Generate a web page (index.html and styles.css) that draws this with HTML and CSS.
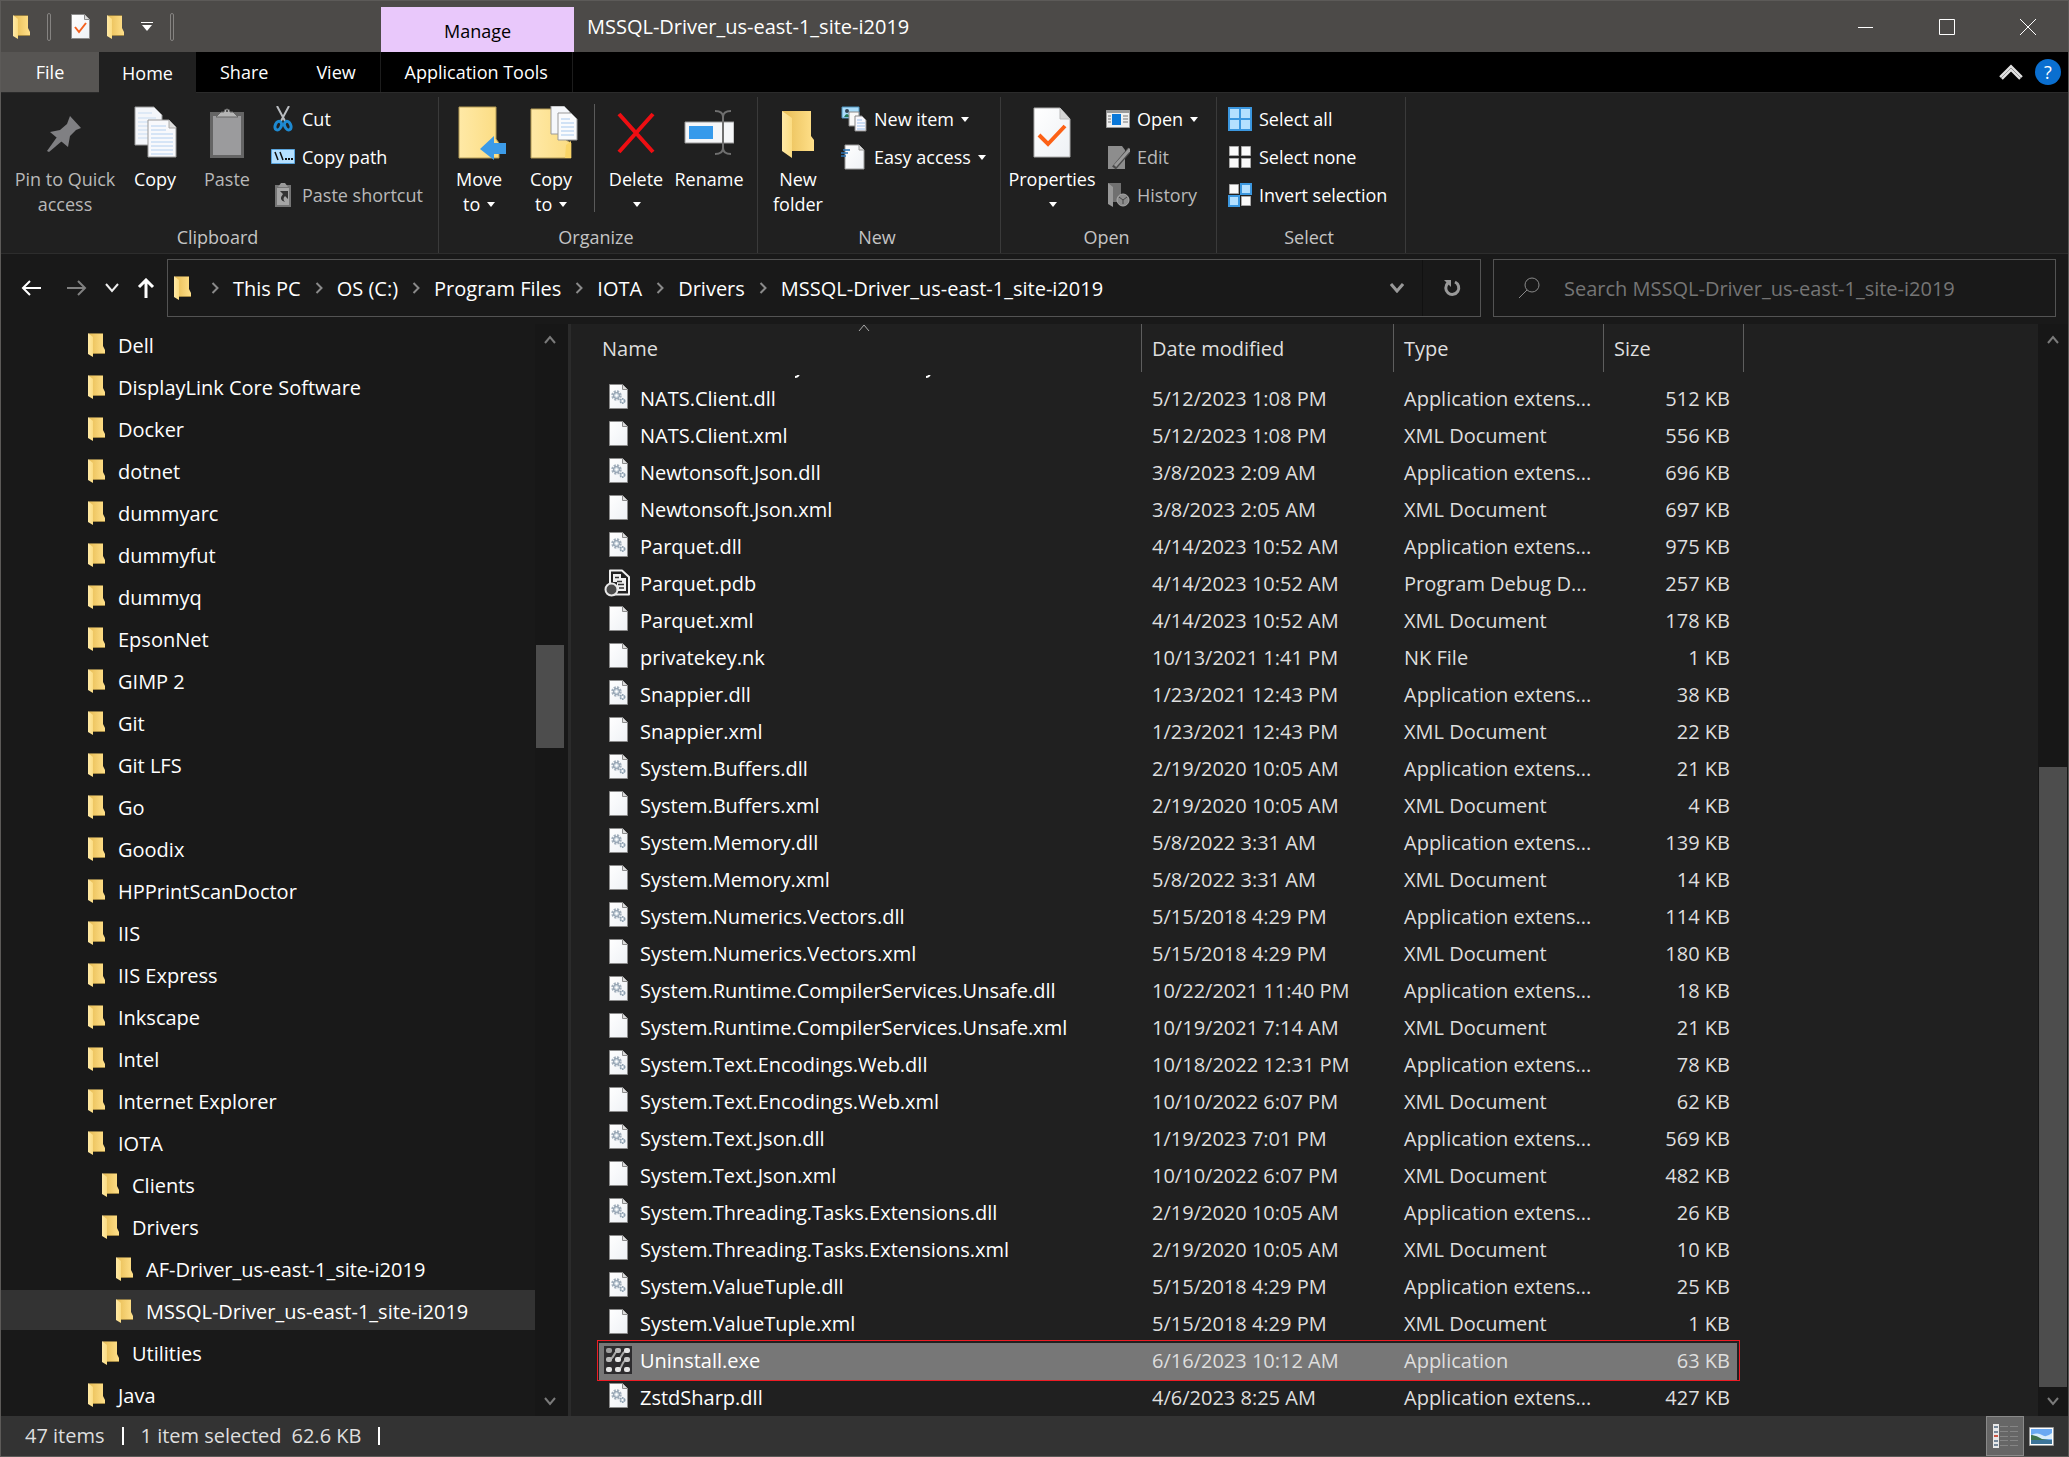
FILE: index.html
```html
<!DOCTYPE html>
<html lang="en">
<head>
    <meta charset="utf-8">
    <title>MSSQL-Driver_us-east-1_site-i2019</title>
    <link rel="stylesheet" href="styles.css">
</head>
<body>
    <!-- shared icons -->
    <svg class="sprite" aria-hidden="true">
        <defs>
            <linearGradient id="gold" x1="0" x2="1"><stop offset="0" stop-color="#e8bd55"/><stop offset="1" stop-color="#ffe08a"/></linearGradient>
            <linearGradient id="flap" x1="0" x2="1"><stop offset="0" stop-color="#ffe9a6"/><stop offset="1" stop-color="#fbdc82"/></linearGradient>
            <linearGradient id="paper" x1="0" x2="1" y2="1"><stop offset="0" stop-color="#ffffff"/><stop offset="1" stop-color="#eef1f5"/></linearGradient>
        </defs>
        <symbol id="folder" viewBox="0 0 17 24">
            <path d="M1 0H15V13L17 17V21H4Z" fill="url(#gold)"/>
            <path d="M1 0H15V1H1Z" fill="#8f7a45"/>
            <path d="M4 20H17V21H4Z" fill="#a58a45"/>
            <path d="M0 0L5 4V24L0 21Z" fill="url(#flap)"/>
        </symbol>
        <symbol id="page" viewBox="0 0 19 25">
            <path d="M.5 .5H13.500L18.500 5.500V24.500H.5Z" fill="url(#paper)" stroke="#8b8b8b"/>
            <path d="M13.500 .5V5.500H18.500" fill="#dcdcdc" stroke="#8b8b8b"/>
        </symbol>
        <symbol id="dll" viewBox="0 0 19 25">
            <use href="#page"/>
            <circle cx="7.500" cy="11.500" r="4" fill="none" stroke="#a3b0bd" stroke-width="2.500" stroke-dasharray="2 1.140"/>
            <circle cx="7.500" cy="11.500" r="3" fill="#c5d0da" stroke="#8b9aaa"/>
            <circle cx="7.500" cy="11.500" r="1.200" fill="#fff"/>
            <circle cx="13.500" cy="17" r="2.300" fill="#b8c6d2" stroke="#8fa0b0" stroke-width="1.500" stroke-dasharray="1.500 .8"/>
            <circle cx="13.500" cy="17" r="1" fill="#fff"/>
        </symbol>
        <symbol id="pdb" viewBox="0 0 28 28">
            <path d="M6 1.500H18L25 8V25.500H6Z" fill="#202020" stroke="#f0f0f0" stroke-width="2" stroke-linejoin="round"/>
            <path d="M9 5H17V9H22V22H13V13H9Z" fill="#efefef"/>
            <path d="M11 8.500H15M13 12.500H18M14 15.500H20M15 19H20" stroke="#333" stroke-width="1.500"/>
            <circle cx="7.500" cy="20.500" r="6" fill="#4a4a4a" stroke="#e8e8e8" stroke-width="2"/>
        </symbol>
        <symbol id="exe" viewBox="0 0 28 28">
            <path d="M0 0H28V28H0Z" fill="#2d2c2e"/>
            <g fill="none" stroke="#a9a9a9" stroke-width="2">
                <path d="M14 5Q12 5 10 9T5 14M23 5Q20 5 18 9T14 14M23 14Q20 14 18 19T14 23"/>
            </g>
            <g fill="#e6e6e6">
                <rect x="2" y="2" width="6" height="5" rx="2" fill="#9d9d9d"/><rect x="11" y="2" width="6" height="5" rx="2" fill="#bbb"/><rect x="20" y="2" width="6" height="5" rx="2"/>
                <rect x="2" y="11" width="6" height="5" rx="2" fill="#bbb"/><rect x="11" y="11" width="6" height="5" rx="2"/><rect x="20" y="11" width="6" height="5" rx="2" fill="#c8c8c8"/>
                <rect x="2" y="21" width="6" height="5" rx="2"/><rect x="11" y="21" width="6" height="5" rx="2"/><rect x="20" y="21" width="6" height="5" rx="2"/>
            </g>
        </symbol>
        <symbol id="crumb" viewBox="0 0 8 12"><path d="M1.500 1L6.500 6L1.500 11" fill="none" stroke="#8a8a8a" stroke-width="2"/></symbol>
        <symbol id="up" viewBox="0 0 12 10"><path d="M1 8L6 2L11 8" fill="none" stroke="#7a7a7a" stroke-width="2"/></symbol>
        <symbol id="down" viewBox="0 0 12 10"><path d="M1 2L6 8L11 2" fill="none" stroke="#7a7a7a" stroke-width="2"/></symbol>
        <symbol id="caret" viewBox="0 0 8 5"><path d="M0 0H8L4 5Z" fill="#fff"/></symbol>
    </svg>

    <div class="window">
        <header class="titlebar">
            <div class="quick">
                <svg class="folder"><use href="#folder"/></svg>
                <span class="grip"></span>
                <button class="plain" aria-label="Properties"><svg width="19" height="25" viewBox="0 0 19 25"><use href="#page"/><path d="M4 13L8 18L15 9" fill="none" stroke="#f4611f" stroke-width="2"/></svg></button>
                <button class="plain" aria-label="New folder"><svg class="folder"><use href="#folder"/></svg></button>
                <button class="plain" aria-label="Customize"><svg width="12" height="9" viewBox="0 0 12 9"><path d="M0 .5H12" stroke="#fff"/><path d="M1 3H11L6 9Z" fill="#fff"/></svg></button>
                <span class="grip"></span>
            </div>
            <div class="manage">Manage</div>
            <h1>MSSQL-Driver_us-east-1_site-i2019</h1>
            <div class="controls">
                <button aria-label="Minimize"><svg width="16" height="16"><path d="M0 8.500H15" stroke="#fff"/></svg></button>
                <button aria-label="Maximize"><svg width="16" height="16"><path d="M.5 .5H15.500V15.500H.5Z" fill="none" stroke="#fff"/></svg></button>
                <button aria-label="Close"><svg width="16" height="16"><path d="M0 0L16 16M16 0L0 16" stroke="#fff"/></svg></button>
            </div>
        </header>

        <nav class="tabs">
            <button class="file">File</button>
            <button class="home">Home</button>
            <button>Share</button>
            <button>View</button>
            <button class="tools">Application Tools</button>
            <span class="fill"></span>
            <button class="plain" aria-label="Collapse ribbon"><svg width="24" height="16" viewBox="0 0 24 16"><path d="M2 14L12 4L22 14" fill="none" stroke="#e0e0e0" stroke-width="5"/><path d="M2 14L12 4L22 14" fill="none" stroke="#999" stroke-width="1"/></svg></button>
            <button class="help" aria-label="Help">?</button>
        </nav>

        <section class="ribbon">
            <div class="group clipboard">
                <div class="tools-row">
                    <button class="big pin off"><svg width="54" height="54" viewBox="0 0 54 54"><g fill="#808083"><path d="M32 10L43 22L38 24L32 30L30 41L12 26L22 24L29 18Z"/><path d="M19 31L9 45L11 46L24 35Z"/></g></svg>Pin to Quick<br>access</button>
                    <button class="big narrow"><svg width="46" height="54" viewBox="0 0 46 54"><path d="M3 1H22L30 9V39H3Z" fill="#f4f6fa" stroke="#999"/><path d="M6 7H20M6 12H24M6 16H24M6 20H24M6 24H24M6 28H24M6 32H24" stroke="#c8dcf2"/><path d="M16 14H37L44 21V51H16Z" fill="#f8f9fc" stroke="#999"/><path d="M37 14V22H44" fill="#ddd" stroke="#aaa"/><path d="M19 20H34M19 24H34M19 28H41M19 32H41M19 36H41M19 40H41M19 44H41M19 48H41" stroke="#b4d0f0"/></svg>Copy</button>
                    <button class="big paste off"><svg width="36" height="54" viewBox="0 0 36 54"><path d="M1 6H35V52H1Z" fill="#656565"/><path d="M4 10H32V49H4Z" fill="#9b9b9d"/><path d="M7 11L12 6H15A3 3 0 0 1 21 6H24L29 11Z" fill="#b5b5b5" stroke="#666"/><circle cx="18" cy="5" r="1" fill="#333"/></svg>Paste</button>
                    <div class="list">
                        <button><svg width="24" height="26" viewBox="0 0 24 26"><path d="M6 0L14 15M18 0L10 15" stroke="#b9bcc0" stroke-width="2"/><g fill="none" stroke="#1e8ad2" stroke-width="3"><ellipse cx="7.500" cy="19.500" rx="3" ry="4.500" transform="rotate(25 7 19)"/><ellipse cx="16.500" cy="19.500" rx="3" ry="4.500" transform="rotate(-25 17 19)"/></g></svg>Cut</button>
                        <button><svg width="24" height="26" viewBox="0 0 24 26"><path d="M.5 5.500H23.500V19.500H.5Z" fill="#b5e0ff" stroke="#5aa5dd"/><path d="M4 8L7 16M9 8L12 16" stroke="#111" stroke-width="1.500"/><path d="M14 15H22" stroke="#111" stroke-width="2" stroke-dasharray="2 1"/></svg>Copy path</button>
                        <button class="off"><svg width="24" height="26" viewBox="0 0 24 26"><path d="M4 3H20V25H4Z" fill="#757575"/><path d="M6 6H18V23H6Z" fill="#a5a5a5"/><path d="M7 5L10 1H14L17 5Z" fill="#999"/><path d="M9 9H17V17L14 14Q11 17 14 20Q7 18 12 12Z" fill="#333"/></svg>Paste shortcut</button>
                    </div>
                </div>
                <h2>Clipboard</h2>
            </div>

            <div class="group organize">
                <div class="tools-row">
                    <button class="big"><svg width="54" height="54" viewBox="-6 0 54 54"><path d="M1 1H38V33L41 37V52H1Z" fill="url(#flap)" stroke="#b39a55"/><path d="M48 37H36V30L22 43L36 54V48H48Z" fill="#3c9be8"/></svg>Move<br>to <svg class="caret"><use href="#caret"/></svg></button>
                    <button class="big"><svg width="54" height="54" viewBox="-6 0 54 54"><path d="M1 3H36V34L41 37V52H1Z" fill="url(#flap)" stroke="#b39a55"/><path d="M36 39L41 35V52H35Z" fill="#fad567"/><path d="M21 0H34L40 6V28H21Z" fill="#f5f7fb" stroke="#999"/><path d="M28 7H41L47 13V34H28Z" fill="#fafbfd" stroke="#999"/><path d="M31 13H40M31 17H44M31 21H44M31 25H44M31 29H44" stroke="#a8c9ee"/></svg>Copy<br>to <svg class="caret"><use href="#caret"/></svg></button>
                    <span class="rule"></span>
                    <button class="big"><svg width="44" height="54" viewBox="0 0 44 54"><path d="M5 8L39 46M39 8L5 46" stroke="#ee0e12" stroke-width="4"/></svg>Delete<br><svg class="caret"><use href="#caret"/></svg></button>
                    <button class="big wide"><svg width="50" height="54" viewBox="0 0 50 54"><path d="M1 16H50V37H1Z" fill="#f5f6f8" stroke="#999"/><path d="M5 20H29V33H5Z" fill="#369aeb"/><path d="M31 5Q39 5 39 11V42Q39 48 31 48M47 5Q39 5 39 11V42Q39 48 47 48" fill="none" stroke="#6f6f6f" stroke-width="2"/></svg>Rename</button>
                </div>
                <h2>Organize</h2>
            </div>

            <div class="group new">
                <div class="tools-row">
                    <button class="big"><svg width="36" height="54" viewBox="0 0 36 54"><path d="M2 5H31V30L34 34V45H10Z" fill="url(#gold)"/><path d="M2 5L12 12V52L2 45Z" fill="url(#flap)"/></svg>New<br>folder</button>
                    <div class="list">
                        <button><svg width="26" height="26" viewBox="0 0 26 26"><path d="M1 1H18V12H1Z" fill="#a9dcfa" stroke="#4e93bd"/><circle cx="6" cy="5" r="2" fill="#345"/><path d="M3 11Q6 5 9 11Z" fill="#275"/><path d="M8 6H18V20H8Z" fill="#f8f8f8" stroke="#888"/><path d="M14 10H21L25 14V25H14Z" fill="#f8f8ff" stroke="#888"/><path d="M16 14H21M16 17H24M16 20H24M16 23H24" stroke="#9cc0ea"/></svg>New item <svg class="caret"><use href="#caret"/></svg></button>
                        <button><svg width="26" height="26" viewBox="0 0 26 26"><path d="M4 1H18L23 6V25H4Z" fill="url(#paper)" stroke="#999"/><path d="M18 1V6H23" fill="#ddd" stroke="#999"/><path d="M2 6H9M0 9H7M0 12H5" stroke="#2d74b5" stroke-width="1.500"/></svg>Easy access <svg class="caret"><use href="#caret"/></svg></button>
                    </div>
                </div>
                <h2>New</h2>
            </div>

            <div class="group open">
                <div class="tools-row">
                    <button class="big props"><svg width="38" height="54" viewBox="0 0 38 54"><path d="M1 2H27L37 13V51H1Z" fill="url(#paper)" stroke="#aaa"/><path d="M27 2V13H37" fill="#d5d5d5" stroke="#bbb"/><path d="M6 29L15 38L32 20" fill="none" stroke="#fc6116" stroke-width="4"/></svg>Properties<br><svg class="caret"><use href="#caret"/></svg></button>
                    <div class="list">
                        <button><svg width="24" height="26" viewBox="0 0 24 26"><path d="M.5 4.500H23.500V21.500H.5Z" fill="#f0f0f0" stroke="#999"/><path d="M.5 4H23.500V7H.5Z" fill="#999"/><path d="M6 8H15V19H6Z" fill="#0b78d8"/><path d="M2 10H5M2 13H5M2 16H5M17 10H22M17 13H22M17 16H22" stroke="#777"/></svg>Open <svg class="caret"><use href="#caret"/></svg></button>
                        <button class="off"><svg width="24" height="26" viewBox="0 0 24 26"><path d="M2 2H16L19 6V25H2Z" fill="#8d8d8d"/><path d="M24 5L8 24" stroke="#4a4a4a" stroke-width="5"/><path d="M24 5L9 22" stroke="#999" stroke-width="3"/></svg>Edit</button>
                        <button class="off"><svg width="24" height="26" viewBox="0 0 24 26"><path d="M2 1H15V20H6Z" fill="#707070"/><path d="M2 1L7 5V25L2 22Z" fill="#989898"/><circle cx="17" cy="18" r="6" fill="#8c8c8c" stroke="#aaa"/><path d="M13 15L17 18L21 15M17 18V22" stroke="#444" fill="none"/></svg>History</button>
                    </div>
                </div>
                <h2>Open</h2>
            </div>

            <div class="group select">
                <div class="tools-row">
                    <div class="list">
                        <button><svg width="24" height="26" viewBox="0 0 24 26"><path d="M0 1H24V25H0Z" fill="#3b97df"/><path d="M2 3H11V12H2ZM13 3H22V12H13ZM2 14H11V23H2ZM13 14H22V23H13Z" fill="#b4e0ff"/></svg>Select all</button>
                        <button><svg width="24" height="26" viewBox="0 0 24 26"><path d="M1.500 2.500H10.500V11.500H1.500ZM13.500 2.500H22.500V11.500H13.500ZM1.500 14.500H10.500V23.500H1.500ZM13.500 14.500H22.500V23.500H13.500Z" fill="#fafafa" stroke="#a8a8a8"/></svg>Select none</button>
                        <button><svg width="24" height="26" viewBox="0 0 24 26"><path d="M1.500 2.500H10.500V11.500H1.500ZM13.500 14.500H22.500V23.500H13.500Z" fill="#fafafa" stroke="#a8a8a8"/><path d="M13 2H23V12H13ZM1 14H11V24H1Z" fill="#b4e0ff" stroke="#3b97df" stroke-width="2"/></svg>Invert selection</button>
                    </div>
                </div>
                <h2>Select</h2>
            </div>
        </section>

        <div class="location">
            <div class="history">
                <button class="plain" aria-label="Back"><svg width="20" height="16" viewBox="0 0 20 16"><path d="M20 8H2M9 1L2 8L9 15" fill="none" stroke="#fff" stroke-width="2"/></svg></button>
                <button class="plain" aria-label="Forward"><svg width="20" height="16" viewBox="0 0 20 16"><path d="M0 8H18M11 1L18 8L11 15" fill="none" stroke="#808080" stroke-width="2"/></svg></button>
                <button class="plain" aria-label="Recent locations"><svg width="14" height="10" viewBox="0 0 14 10"><path d="M1 1L7 8L13 1" fill="none" stroke="#eee" stroke-width="2"/></svg></button>
                <button class="plain" aria-label="Up"><svg width="18" height="20" viewBox="0 0 18 20"><path d="M9 20V3M2 9L9 2L16 9" fill="none" stroke="#fff" stroke-width="3"/></svg></button>
            </div>
            <div class="address">
                <svg class="folder"><use href="#folder"/></svg>
                <svg class="crumb"><use href="#crumb"/></svg>
                <a href="#">This PC</a>
                <svg class="crumb"><use href="#crumb"/></svg>
                <a href="#">OS (C:)</a>
                <svg class="crumb"><use href="#crumb"/></svg>
                <a href="#">Program Files</a>
                <svg class="crumb"><use href="#crumb"/></svg>
                <a href="#">IOTA</a>
                <svg class="crumb"><use href="#crumb"/></svg>
                <a href="#">Drivers</a>
                <svg class="crumb"><use href="#crumb"/></svg>
                <a href="#">MSSQL-Driver_us-east-1_site-i2019</a>
                <span class="fill"></span>
                <button class="plain drop" aria-label="Previous locations"><svg width="14" height="10" viewBox="0 0 14 10"><path d="M1 1L7 8L13 1" fill="none" stroke="#999" stroke-width="3"/></svg></button>
                <button class="refresh" aria-label="Refresh"><svg width="18" height="18" viewBox="0 0 18 18"><path d="M12 3A6.500 6.500 0 1 1 5 4" fill="none" stroke="#999" stroke-width="3"/><path d="M1 1H8V8Z" fill="#999"/></svg></button>
            </div>
            <label class="search">
                <svg width="22" height="22" viewBox="0 0 22 22"><circle cx="14" cy="8" r="7" fill="none" stroke="#8a8a8a"/><path d="M9 13L1 21" stroke="#8a8a8a"/></svg>
                <input type="search" aria-label="Search" placeholder="Search MSSQL-Driver_us-east-1_site-i2019">
            </label>
        </div>

        <main class="panes">
            <nav class="tree">
                <ul>
                    <li><a href="#"><svg class="folder"><use href="#folder"/></svg>Dell</a></li>
                    <li><a href="#"><svg class="folder"><use href="#folder"/></svg>DisplayLink Core Software</a></li>
                    <li><a href="#"><svg class="folder"><use href="#folder"/></svg>Docker</a></li>
                    <li><a href="#"><svg class="folder"><use href="#folder"/></svg>dotnet</a></li>
                    <li><a href="#"><svg class="folder"><use href="#folder"/></svg>dummyarc</a></li>
                    <li><a href="#"><svg class="folder"><use href="#folder"/></svg>dummyfut</a></li>
                    <li><a href="#"><svg class="folder"><use href="#folder"/></svg>dummyq</a></li>
                    <li><a href="#"><svg class="folder"><use href="#folder"/></svg>EpsonNet</a></li>
                    <li><a href="#"><svg class="folder"><use href="#folder"/></svg>GIMP 2</a></li>
                    <li><a href="#"><svg class="folder"><use href="#folder"/></svg>Git</a></li>
                    <li><a href="#"><svg class="folder"><use href="#folder"/></svg>Git LFS</a></li>
                    <li><a href="#"><svg class="folder"><use href="#folder"/></svg>Go</a></li>
                    <li><a href="#"><svg class="folder"><use href="#folder"/></svg>Goodix</a></li>
                    <li><a href="#"><svg class="folder"><use href="#folder"/></svg>HPPrintScanDoctor</a></li>
                    <li><a href="#"><svg class="folder"><use href="#folder"/></svg>IIS</a></li>
                    <li><a href="#"><svg class="folder"><use href="#folder"/></svg>IIS Express</a></li>
                    <li><a href="#"><svg class="folder"><use href="#folder"/></svg>Inkscape</a></li>
                    <li><a href="#"><svg class="folder"><use href="#folder"/></svg>Intel</a></li>
                    <li><a href="#"><svg class="folder"><use href="#folder"/></svg>Internet Explorer</a></li>
                    <li><a href="#"><svg class="folder"><use href="#folder"/></svg>IOTA</a></li>
                    <li class="level1"><a href="#"><svg class="folder"><use href="#folder"/></svg>Clients</a></li>
                    <li class="level1"><a href="#"><svg class="folder"><use href="#folder"/></svg>Drivers</a></li>
                    <li class="level2"><a href="#"><svg class="folder"><use href="#folder"/></svg>AF-Driver_us-east-1_site-i2019</a></li>
                    <li class="level2 current"><a href="#"><svg class="folder"><use href="#folder"/></svg>MSSQL-Driver_us-east-1_site-i2019</a></li>
                    <li class="level1"><a href="#"><svg class="folder"><use href="#folder"/></svg>Utilities</a></li>
                    <li><a href="#"><svg class="folder"><use href="#folder"/></svg>Java</a></li>
                </ul>
                <div class="scrollbar tree-scroll">
                    <svg class="arrow"><use href="#up"/></svg>
                    <span class="before"></span><span class="thumb"></span><span class="after"></span>
                    <svg class="arrow"><use href="#down"/></svg>
                </div>
            </nav>

            <section class="files">
                <div class="listing">
                    <table>
                        <colgroup><col class="c-name"><col class="c-date"><col class="c-type"><col class="c-size"></colgroup>
                        <thead>
                            <tr><th><svg class="sort" viewBox="0 0 12 8"><path d="M1 7L6 1L11 7" fill="none" stroke="#aaa"/></svg>Name</th><th>Date modified</th><th>Type</th><th>Size</th></tr>
                        </thead>
                        <tbody>
                            <tr class="clipped"><td colspan="4"><svg width="300" height="4"><path d="M154 2Q157 2 158 -1M285 2Q288 2 289 -1" fill="none" stroke="#fff" stroke-width="2"/></svg></td></tr>
                            <tr><td><svg class="doc"><use href="#dll"/></svg>NATS.Client.dll</td><td>5/12/2023 1:08 PM</td><td>Application extens...</td><td>512 KB</td></tr>
                            <tr><td><svg class="doc"><use href="#page"/></svg>NATS.Client.xml</td><td>5/12/2023 1:08 PM</td><td>XML Document</td><td>556 KB</td></tr>
                            <tr><td><svg class="doc"><use href="#dll"/></svg>Newtonsoft.Json.dll</td><td>3/8/2023 2:09 AM</td><td>Application extens...</td><td>696 KB</td></tr>
                            <tr><td><svg class="doc"><use href="#page"/></svg>Newtonsoft.Json.xml</td><td>3/8/2023 2:05 AM</td><td>XML Document</td><td>697 KB</td></tr>
                            <tr><td><svg class="doc"><use href="#dll"/></svg>Parquet.dll</td><td>4/14/2023 10:52 AM</td><td>Application extens...</td><td>975 KB</td></tr>
                            <tr><td><svg class="app"><use href="#pdb"/></svg>Parquet.pdb</td><td>4/14/2023 10:52 AM</td><td>Program Debug D...</td><td>257 KB</td></tr>
                            <tr><td><svg class="doc"><use href="#page"/></svg>Parquet.xml</td><td>4/14/2023 10:52 AM</td><td>XML Document</td><td>178 KB</td></tr>
                            <tr><td><svg class="doc"><use href="#page"/></svg>privatekey.nk</td><td>10/13/2021 1:41 PM</td><td>NK File</td><td>1 KB</td></tr>
                            <tr><td><svg class="doc"><use href="#dll"/></svg>Snappier.dll</td><td>1/23/2021 12:43 PM</td><td>Application extens...</td><td>38 KB</td></tr>
                            <tr><td><svg class="doc"><use href="#page"/></svg>Snappier.xml</td><td>1/23/2021 12:43 PM</td><td>XML Document</td><td>22 KB</td></tr>
                            <tr><td><svg class="doc"><use href="#dll"/></svg>System.Buffers.dll</td><td>2/19/2020 10:05 AM</td><td>Application extens...</td><td>21 KB</td></tr>
                            <tr><td><svg class="doc"><use href="#page"/></svg>System.Buffers.xml</td><td>2/19/2020 10:05 AM</td><td>XML Document</td><td>4 KB</td></tr>
                            <tr><td><svg class="doc"><use href="#dll"/></svg>System.Memory.dll</td><td>5/8/2022 3:31 AM</td><td>Application extens...</td><td>139 KB</td></tr>
                            <tr><td><svg class="doc"><use href="#page"/></svg>System.Memory.xml</td><td>5/8/2022 3:31 AM</td><td>XML Document</td><td>14 KB</td></tr>
                            <tr><td><svg class="doc"><use href="#dll"/></svg>System.Numerics.Vectors.dll</td><td>5/15/2018 4:29 PM</td><td>Application extens...</td><td>114 KB</td></tr>
                            <tr><td><svg class="doc"><use href="#page"/></svg>System.Numerics.Vectors.xml</td><td>5/15/2018 4:29 PM</td><td>XML Document</td><td>180 KB</td></tr>
                            <tr><td><svg class="doc"><use href="#dll"/></svg>System.Runtime.CompilerServices.Unsafe.dll</td><td>10/22/2021 11:40 PM</td><td>Application extens...</td><td>18 KB</td></tr>
                            <tr><td><svg class="doc"><use href="#page"/></svg>System.Runtime.CompilerServices.Unsafe.xml</td><td>10/19/2021 7:14 AM</td><td>XML Document</td><td>21 KB</td></tr>
                            <tr><td><svg class="doc"><use href="#dll"/></svg>System.Text.Encodings.Web.dll</td><td>10/18/2022 12:31 PM</td><td>Application extens...</td><td>78 KB</td></tr>
                            <tr><td><svg class="doc"><use href="#page"/></svg>System.Text.Encodings.Web.xml</td><td>10/10/2022 6:07 PM</td><td>XML Document</td><td>62 KB</td></tr>
                            <tr><td><svg class="doc"><use href="#dll"/></svg>System.Text.Json.dll</td><td>1/19/2023 7:01 PM</td><td>Application extens...</td><td>569 KB</td></tr>
                            <tr><td><svg class="doc"><use href="#page"/></svg>System.Text.Json.xml</td><td>10/10/2022 6:07 PM</td><td>XML Document</td><td>482 KB</td></tr>
                            <tr><td><svg class="doc"><use href="#dll"/></svg>System.Threading.Tasks.Extensions.dll</td><td>2/19/2020 10:05 AM</td><td>Application extens...</td><td>26 KB</td></tr>
                            <tr><td><svg class="doc"><use href="#page"/></svg>System.Threading.Tasks.Extensions.xml</td><td>2/19/2020 10:05 AM</td><td>XML Document</td><td>10 KB</td></tr>
                            <tr><td><svg class="doc"><use href="#dll"/></svg>System.ValueTuple.dll</td><td>5/15/2018 4:29 PM</td><td>Application extens...</td><td>25 KB</td></tr>
                            <tr><td><svg class="doc"><use href="#page"/></svg>System.ValueTuple.xml</td><td>5/15/2018 4:29 PM</td><td>XML Document</td><td>1 KB</td></tr>
                            <tr class="selected"><td><svg class="app"><use href="#exe"/></svg>Uninstall.exe</td><td>6/16/2023 10:12 AM</td><td>Application</td><td>63 KB</td></tr>
                            <tr><td><svg class="doc"><use href="#dll"/></svg>ZstdSharp.dll</td><td>4/6/2023 8:25 AM</td><td>Application extens...</td><td>427 KB</td></tr>
                        </tbody>
                    </table>
                </div>
                <div class="scrollbar file-scroll">
                    <svg class="arrow"><use href="#up"/></svg>
                    <span class="before"></span><span class="thumb"></span><span class="after"></span>
                    <svg class="arrow"><use href="#down"/></svg>
                </div>
            </section>
        </main>

        <footer class="status">
            <span>47 items</span>
            <span class="bar"></span>
            <span>1 item selected</span>
            <span class="bytes">62.6 KB</span>
            <span class="bar"></span>
            <span class="fill"></span>
            <button class="view on" aria-label="Details"><svg width="26" height="24" viewBox="0 0 26 24"><path d="M1 0H7V24H1Z" fill="#e8e8e8"/><path d="M2 3H6M2 8H6M2 17H6M2 21H6" stroke="#789" stroke-width="2"/><path d="M2 12H6" stroke="#c54" stroke-width="2"/><path d="M8 2.500H16M18 2.500H26M8 7.500H16M18 7.500H26M8 12.500H16M18 12.500H26M8 16.500H16M18 16.500H26M8 21.500H16M18 21.500H26" stroke="#858585"/></svg></button>
            <button class="view" aria-label="Large icons"><svg width="25" height="19" viewBox="0 0 25 19"><path d="M.5 .5H24.500V18.500H.5Z" fill="#fff" stroke="#999"/><path d="M2 2H23V17H2Z" fill="#6aa9f2"/><path d="M2 8Q9 5 13 8T23 6V12H2Z" fill="#d8ecfb"/><path d="M2 8Q7 8 13 12L20 13H2Z" fill="#3f7350"/><path d="M2 13H23V17H2Z" fill="#3d7499"/></svg></button>
        </footer>
    </div>
</body>
</html>
```
FILE: styles.css
```css
* {
    box-sizing: border-box;
}
body {
    margin: 0;
    background: #191919;
    color: #fff;
    font-family: "Open Sans", "Noto Sans", sans-serif;
    font-size: 20px;
    line-height: 24px;
}
.sprite {
    position: absolute;
    width: 0;
    height: 0;
}
svg {
    flex: none;
}
button {
    padding: 0;
    border: 0;
    background: none;
    color: inherit;
    font: inherit;
}
a {
    color: inherit;
    text-decoration: none;
}
h1, h2, ul {
    margin: 0;
    padding: 0;
    font-size: inherit;
    font-weight: normal;
}
.fill {
    flex: 1;
}
.plain {
    display: flex;
}
.folder {
    width: 17px;
    height: 24px;
}
.caret {
    width: 8px;
    height: 5px;
}
.window {
    display: flex;
    flex-direction: column;
    height: 100vh;
    border: 1px solid #5c5a58;
    overflow: hidden;
}

/* title bar */
.titlebar {
    display: flex;
    flex: none;
    height: 51px;
    background: #4c4a48;
}
.quick {
    display: flex;
    align-items: center;
    gap: 17px;
    width: 380px;
    padding-left: 12px;
}
.grip {
    width: 4px;
    height: 28px;
    border: 1px solid #858381;
    border-radius: 2px;
}
.quick .grip + .plain {
    margin-left: 3px;
}
.manage {
    width: 193px;
    margin-top: 6px;
    background: #e9c8fb;
    color: #000;
    font-size: 18px;
    line-height: 48px;
    text-align: center;
}
.titlebar h1 {
    flex: 1;
    padding-left: 13px;
    line-height: 51px;
}
.controls {
    display: flex;
}
.controls button {
    display: flex;
    align-items: center;
    justify-content: center;
    width: 81px;
}

/* tabs */
.tabs {
    display: flex;
    flex: none;
    align-items: center;
    height: 41px;
    background: #000;
    border-bottom: 1px solid #2b2b2b;
    font-size: 18px;
}
.tabs button {
    height: 40px;
    padding: 0 24px;
}
.tabs .file {
    width: 98px;
    padding: 0;
    background: #575553;
}
.tabs .home {
    height: 41px;
    width: 97px;
    padding: 0;
    margin-bottom: -1px;
    background: #202020;
}
.tabs .tools {
    width: 193px;
    padding: 0;
    border: solid #1c1c1c;
    border-width: 0 1px;
}
.tabs .plain {
    align-items: center;
    padding: 0 12px;
}
.tabs .help {
    width: 26px;
    height: 26px;
    margin-right: 7px;
    padding: 0;
    border-radius: 50%;
    background: #0a6fd0;
    line-height: 26px;
}

/* ribbon */
.ribbon {
    display: flex;
    flex: none;
    height: 161px;
    padding-top: 4px;
    background: #202020;
    border-bottom: 1px solid #2d2d2d;
    font-size: 18px;
}
.group {
    flex: none;
    padding: 0 4px;
    border-right: 1px solid #3a3a3a;
}
.group h2 {
    height: 28px;
    padding-right: 4px;
    color: #c4c4c4;
    line-height: 26px;
    text-align: center;
}
.clipboard {
    width: 438px;
}
.organize {
    width: 319px;
}
.new {
    width: 243px;
}
.open {
    width: 216px;
}
.select {
    width: 189px;
}
.tools-row {
    display: flex;
    align-items: flex-start;
    height: 127px;
}
.big {
    width: 72px;
    padding-top: 9px;
    line-height: 25px;
    white-space: nowrap;
    text-align: center;
}
.big > svg:first-child {
    display: block;
    margin: 0 auto 7px;
}
.big .caret, .list .caret {
    margin-left: 2px;
    vertical-align: 4px;
}
.list .caret {
    margin-left: 7px;
}
.big.narrow {
    width: 60px;
}
.big.paste {
    width: 84px;
}
.big.wide {
    width: 74px;
}
.big.pin {
    width: 120px;
}
.big.props {
    width: 94px;
}
.off {
    color: #b8b8b8;
}
.rule {
    width: 1px;
    height: 108px;
    margin: 7px 5px 0 7px;
    background: #5a5a5a;
}
.list {
    padding: 3px 0 0 7px;
}
.clipboard .list {
    padding-left: 2px;
}
.list button {
    display: flex;
    align-items: center;
    height: 38px;
    white-space: nowrap;
}
.list button > svg:first-child {
    margin-right: 7px;
}

/* location bar */
.location {
    display: flex;
    flex: none;
    gap: 12px;
    height: 70px;
    padding: 5px 12px 7px 20px;
}
.history {
    display: flex;
    align-items: center;
    gap: 18px;
    width: 134px;
}
.history .plain:first-child {
    margin-right: 8px;
}
.address, .search {
    display: flex;
    align-items: center;
    border: 1px solid #535353;
}
.address {
    flex: 1;
    gap: 14px;
    padding-left: 6px;
}
.address a {
    line-height: 26px;
    padding-top: 2px;
}
.address .folder {
    margin-right: 6px;
}
.drop {
    margin-right: 4px;
}
.crumb {
    width: 8px;
    height: 12px;
}
.refresh {
    display: flex;
    align-items: center;
    align-self: stretch;
    justify-content: center;
    width: 58px;
    border-left: 1px solid #111;
}
.search {
    width: 563px;
    padding-left: 24px;
}
.search input {
    flex: 1;
    padding: 2px 0 0 24px;
    border: 0;
    outline: 0;
    background: none;
    color: #fff;
    font: inherit;
}
.search input::placeholder {
    color: #757575;
}

/* panes */
.panes {
    display: flex;
    flex: 1;
    min-height: 0;
}
.tree {
    display: flex;
    width: 570px;
    border-right: 3px solid #2b2b2b;
}
.tree ul {
    flex: 1;
    list-style: none;
}
.tree li {
    height: 42px;
    padding: 0 0 2px 87px;
}
.tree .level1 {
    padding-left: 101px;
}
.tree .level2 {
    padding-left: 115px;
}
.tree li a {
    display: flex;
    gap: 13px;
    height: 40px;
    padding-top: 9px;
    line-height: 26px;
}
.tree .current {
    background: #333;
    box-shadow: inset 0 -2px #191919;
}
.scrollbar {
    display: flex;
    flex: none;
    flex-direction: column;
    align-items: center;
    width: 30px;
    padding: 11px 0 10px;
    background: #171717;
}
.arrow {
    width: 12px;
    height: 10px;
}
.thumb {
    width: 28px;
    background: #4d4d4d;
}
.tree-scroll {
    width: 33px;
    padding-right: 3px;
}
.tree-scroll .before {
    flex: 300;
}
.tree-scroll .thumb {
    flex: 103;
}
.tree-scroll .after {
    flex: 648;
}
.file-scroll .before {
    flex: 422;
}
.file-scroll .thumb {
    flex: 620;
}
.file-scroll .after {
    flex: 9;
}
.files {
    display: flex;
    flex: 1;
    background: #202020;
}
.listing {
    flex: 1;
    padding-left: 26px;
}
table {
    width: 1147px;
    table-layout: fixed;
    border-collapse: separate;
    border-spacing: 0;
}
.c-name {
    width: 545px;
}
.c-date {
    width: 252px;
}
.c-type {
    width: 210px;
}
.c-size {
    width: 140px;
}
th {
    position: relative;
    height: 48px;
    padding: 2px 0 0 10px;
    border-right: 1px solid #5e5e5e;
    color: #dedede;
    font-weight: normal;
    text-align: left;
}
th:first-child {
    padding-left: 5px;
}
.sort {
    position: absolute;
    top: 0;
    left: 48%;
    width: 12px;
    height: 8px;
}
td {
    height: 37px;
    padding: 3px 0 0 10px;
    color: #dedede;
    line-height: 30px;
    vertical-align: top;
    white-space: nowrap;
}
td:first-child {
    display: flex;
    padding-left: 0;
    color: #fff;
}
td:last-child {
    padding-right: 14px;
    text-align: right;
}
.clipped td:first-child {
    display: table-cell;
    height: 9px;
    padding: 0 0 0 44px;
    line-height: 0;
    text-align: left;
}
.doc {
    width: 19px;
    height: 25px;
    margin: 0 12px;
}
.app {
    width: 28px;
    height: 28px;
    margin: 0 8px 0 7px;
}
.selected {
    position: relative;
}
.selected td {
    background: #777;
}
.selected td:first-child {
    box-shadow: inset 2px 0 #202020;
}
.selected td:last-child {
    box-shadow: inset -7px 0 #202020;
}
/* red frame laid over the selected row */
.selected td:last-child::after {
    content: "";
    position: absolute;
    inset: -3px 4px -1px 0;
    border: 1px solid #ee1c24;
}

/* status bar */
.status {
    display: flex;
    flex: none;
    align-items: center;
    height: 40px;
    padding-left: 24px;
    background: #333;
    color: #dedede;
    line-height: 28px;
}
.bar {
    width: 2px;
    height: 18px;
    margin: 0 17px;
    background: #fff;
}
.bytes {
    margin-left: 10px;
}
.view {
    display: flex;
    align-items: center;
    width: 44px;
    height: 40px;
    padding-left: 5px;
}
.view.on {
    width: 38px;
    background: #666;
    border: 1px solid #8a8a8a;
}
```
